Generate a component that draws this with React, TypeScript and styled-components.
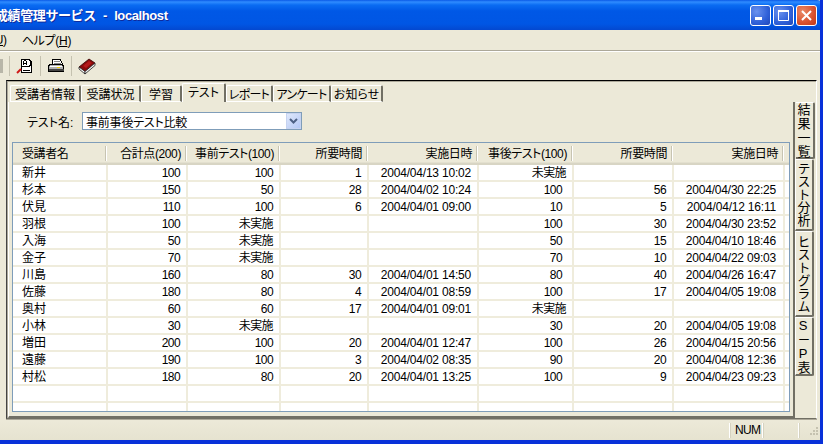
import React from "react";
import styled, { createGlobalStyle } from "styled-components";

const GlobalStyle = createGlobalStyle`
    html, body {
        margin: 0;
        padding: 0;
        background: #ece9d8;
    }
    body {
        font-family: "Liberation Sans", "Noto Sans CJK JP", sans-serif;
        font-size: 12px;
        font-feature-settings: "palt";
        color: #000;
    }
`;

const COLUMNS = "95px 80px 93px 88px 110px 95px 100px 111px 1fr";

const Window = styled.div`
    width: 823px;
    height: 444px;
    box-sizing: border-box;
    overflow: hidden;
    display: flex;
    flex-direction: column;
    background: #ece9d8;
    border-right: 3px solid #0831d9;
    border-bottom: 4px solid #0831d9;
`;

const TitleBar = styled.div`
    height: 30px;
    flex: none;
    margin-right: -3px;
    padding-right: 6px;
    box-sizing: border-box;
    display: flex;
    align-items: center;
    gap: 2px;
    background: linear-gradient(
        #0a5ae6 0,
        #2f8cff 2px,
        #0a6cf2 5px,
        #0058e6 11px,
        #0056e4 24px,
        #0348d0 30px
    );
    border-top-right-radius: 6px;
`;

const TitleText = styled.div`
    flex: 1;
    margin-left: -5px;
    margin-top: -2px;
    color: #fff;
    font-size: 13px;
    font-weight: bold;
    font-feature-settings: normal;
    letter-spacing: -0.4px;
    word-spacing: 4px;
    white-space: nowrap;
    text-shadow: 1px 1px #0f2a9c;
`;

const CaptionButton = styled.div<{ $close?: boolean }>`
    width: 21px;
    height: 21px;
    box-sizing: border-box;
    border: 1px solid #fff;
    border-radius: 3px;
    display: flex;
    align-items: center;
    justify-content: center;
    background: ${(p) =>
        p.$close
            ? "radial-gradient(circle at 30% 30%, #ea8a68, #d8512e 60%, #bf3a16)"
            : "radial-gradient(circle at 30% 30%, #6a92ee, #2f60d8 60%, #2148b8)"};
`;

const MenuBar = styled.div`
    height: 22px;
    flex: none;
    box-sizing: border-box;
    padding-bottom: 2px;
    display: flex;
    align-items: center;
    border-bottom: 1px solid #fff;
    box-shadow: inset 0 -1px #aca899;
`;

const MenuItem = styled.div<{ $clipped?: boolean }>`
    margin-left: ${(p) => (p.$clipped ? "-9px" : "15px")};
    font-size: 12px;
    letter-spacing: -0.3px;
    white-space: nowrap;
    u {
        text-underline-offset: 1px;
    }
`;

const ToolBar = styled.div`
    height: 28px;
    flex: none;
    display: flex;
    align-items: center;
`;

const ToolSeparator = styled.div`
    width: 1px;
    height: 20px;
    background: #c5c2b0;
`;

const ToolStub = styled.div`
    width: 3px;
    height: 14px;
    margin-right: 6px;
    background: #b8b6a8;
`;

const ToolIcon = styled.svg`
    display: block;
    width: 18px;
    height: 18px;
    margin: 0 6px;
`;

const Frame = styled.div`
    flex: 1;
    min-height: 0;
    margin: 0 3px 2px 6px;
    box-sizing: border-box;
    display: flex;
    border-top: 1px solid #000;
    border-left: 1px solid #444;
    border-bottom: 1px solid #716f64;
    border-right: 1px solid #fff;
    box-shadow: inset 1px 1px #aca899, 0 1px #aca899;
`;

const Page = styled.div`
    width: 788px;
    flex: none;
    padding: 2px 0 0 1px;
    box-sizing: border-box;
    display: flex;
    flex-direction: column;
`;

const TabRow = styled.div`
    height: 19px;
    flex: none;
    padding-left: 2px;
    display: flex;
    align-items: flex-end;
`;

const Tab = styled.div<{ $active?: boolean; $tight?: boolean; $w: number }>`
    width: ${(p) => p.$w}px;
    height: ${(p) => (p.$active ? 19 : 17)}px;
    box-sizing: border-box;
    padding: ${(p) => (p.$active ? "0 0 3px 0" : "0")};
    display: flex;
    align-items: center;
    justify-content: center;
    white-space: nowrap;
    font-size: 12px;
    letter-spacing: ${(p) => (p.$tight ? "-0.7px" : "0")};
    border-top: 1px solid #fff;
    border-left: 1px solid #fff;
    border-right: 2px solid #716f64;
    border-radius: 2px 2px 0 0;
    border-bottom: ${(p) => (p.$active ? "none" : "1px solid #fff")};
`;

const Panel = styled.div`
    flex: 1;
    min-height: 0;
    padding: 10px 3px 4px 3px;
    box-sizing: border-box;
    display: flex;
    flex-direction: column;
    border-left: 1px solid #fff;
    border-right: 2px solid #716f64;
    border-bottom: 2px solid #716f64;
`;

const FilterRow = styled.div`
    height: 18px;
    flex: none;
    margin-bottom: 12px;
    padding-left: 15px;
    display: flex;
    align-items: center;
`;

const FilterLabel = styled.label`
    width: 55px;
    flex: none;
    font-size: 12px;
`;

const Combo = styled.div`
    width: 220px;
    height: 18px;
    box-sizing: border-box;
    background: #fff;
    border: 1px solid #7f9db9;
    display: flex;
    align-items: center;
    justify-content: space-between;
    padding-left: 3px;
    font-size: 12px;
    letter-spacing: -0.2px;
`;

const ComboButton = styled.div`
    width: 15px;
    height: 16px;
    border: 1px solid #c6d3f0;
    box-sizing: border-box;
    background: linear-gradient(135deg, #dfe8fb, #b4c8f5);
    display: flex;
    align-items: center;
    justify-content: center;
`;

const Table = styled.div`
    flex: 1;
    min-height: 0;
    overflow: hidden;
    box-sizing: border-box;
    display: flex;
    flex-direction: column;
    background: #fff;
    border: 1px solid #7f9db9;
`;

const HeaderRow = styled.div`
    height: 22px;
    flex: none;
    box-sizing: border-box;
    display: grid;
    grid-template-columns: ${COLUMNS};
    background: #ece9d8;
    border-bottom: 2px solid #d8d5c4;
    box-shadow: inset 0 -1px #e3e0cf;
`;

const HeaderCell = styled.div<{ $left?: boolean }>`
    height: 15px;
    margin: 3px 2px 0 0;
    box-sizing: border-box;
    padding: ${(p) => (p.$left ? "0 0 0 9px" : "0 4px 0 0")};
    line-height: 16px;
    text-align: ${(p) => (p.$left ? "left" : "right")};
    white-space: nowrap;
    letter-spacing: -0.4px;
    border-right: 1px solid #c7c4b2;
    box-shadow: 1px 0 #fff;
`;

const Rows = styled.div`
    flex: 1;
    min-height: 0;
    overflow: hidden;
`;

const Row = styled.div`
    display: grid;
    grid-template-columns: ${COLUMNS};
    height: 17px;
`;

const Cell = styled.div<{ $left?: boolean; $pad?: number; $date?: boolean }>`
    box-sizing: border-box;
    height: 17px;
    padding: ${(p) => (p.$left ? "0 0 0 9px" : `0 ${p.$pad ?? 6}px 0 0`)};
    line-height: 16px;
    font-size: 12px;
    letter-spacing: ${(p) => (p.$left ? "0" : p.$date ? "-0.2px" : "-0.6px")};
    text-align: ${(p) => (p.$left ? "left" : "right")};
    white-space: nowrap;
    overflow: hidden;
    border-right: 2px solid #efecdc;
    border-bottom: 2px solid #efecdc;
`;

const SideTabs = styled.div`
    flex: none;
    padding-top: 21px;
    display: flex;
    flex-direction: column;
`;

const SideTab = styled.div<{ $active?: boolean; $h: number }>`
    width: 19px;
    height: ${(p) => p.$h}px;
    box-sizing: border-box;
    margin-left: ${(p) => (p.$active ? "1px" : "0")};
    padding-right: ${(p) => (p.$active ? "3px" : "2px")};
    writing-mode: vertical-rl;
    text-orientation: upright;
    display: flex;
    align-items: center;
    justify-content: center;
    font-size: 13px;
    font-feature-settings: normal;
    line-height: 15px;
    letter-spacing: ${(p) => (p.$active ? "0.7px" : "0")};
    white-space: nowrap;
    border-top: 1px solid #fff;
    border-right: 2px solid #716f64;
    border-bottom: 2px solid #716f64;
    border-left: ${(p) => (p.$active ? "none" : "1px solid #fff")};
    border-radius: 0 2px 2px 0;
`;

const StatusBar = styled.div`
    height: 19px;
    flex: none;
    display: flex;
    align-items: center;
    justify-content: flex-end;
    background: linear-gradient(#ece9d8, #e6e3d0);
`;

const StatusCell = styled.div<{ $w: number }>`
    width: ${(p) => p.$w}px;
    height: 15px;
    box-sizing: border-box;
    padding-left: 5px;
    line-height: 15px;
    font-size: 12px;
    letter-spacing: -0.7px;
    border-right: 1px solid #fff;
    box-shadow: 1px 0 #d5d2c0;
`;

const Grip = styled.svg`
    display: block;
    width: 21px;
    height: 15px;
    flex: none;
`;

type Result = {
    name: string;
    total: string;
    pre: string;
    preTime: string;
    preDate: string;
    post: string;
    postTime: string;
    postDate: string;
};

const r = (
    name: string,
    total: string,
    pre: string,
    preTime: string,
    preDate: string,
    post: string,
    postTime: string,
    postDate: string
): Result => ({ name, total, pre, preTime, preDate, post, postTime, postDate });

const results: Result[] = [
    r("新井", "100", "100", "1", "2004/04/13 10:02", "未実施", "", ""),
    r("杉本", "150", "50", "28", "2004/04/02 10:24", "100", "56", "2004/04/30 22:25"),
    r("伏見", "110", "100", "6", "2004/04/01 09:00", "10", "5", "2004/04/12 16:11"),
    r("羽根", "100", "未実施", "", "", "100", "30", "2004/04/30 23:52"),
    r("入海", "50", "未実施", "", "", "50", "15", "2004/04/10 18:46"),
    r("金子", "70", "未実施", "", "", "70", "10", "2004/04/22 09:03"),
    r("川島", "160", "80", "30", "2004/04/01 14:50", "80", "40", "2004/04/26 16:47"),
    r("佐藤", "180", "80", "4", "2004/04/01 08:59", "100", "17", "2004/04/05 19:08"),
    r("奥村", "60", "60", "17", "2004/04/01 09:01", "未実施", "", ""),
    r("小林", "30", "未実施", "", "", "30", "20", "2004/04/05 19:08"),
    r("増田", "200", "100", "20", "2004/04/01 12:47", "100", "26", "2004/04/15 20:56"),
    r("遠藤", "190", "100", "3", "2004/04/02 08:35", "90", "20", "2004/04/08 12:36"),
    r("村松", "180", "80", "20", "2004/04/01 13:25", "100", "9", "2004/04/23 09:23"),
    r("", "", "", "", "", "", "", ""),
    r("", "", "", "", "", "", "", ""),
    r("", "", "", "", "", "", "", ""),
];

const tabs = [
    { label: "受講者情報", width: 71 },
    { label: "受講状況", width: 60 },
    { label: "学習", width: 41 },
    { label: "テスト", width: 44, active: true },
    { label: "レポート", width: 47, tight: true },
    { label: "アンケート", width: 58, tight: true },
    { label: "お知らせ", width: 52 },
];

const sideTabs = [
    { label: "結果一覧", height: 57, active: true },
    { label: "テスト分析", height: 72 },
    { label: "ヒストグラム", height: 86 },
    { label: "S－P表", height: 59 },
];

const headers = [
    "受講者名",
    "合計点(200)",
    "事前テスト(100)",
    "所要時間",
    "実施日時",
    "事後テスト(100)",
    "所要時間",
    "実施日時",
    "",
];

const SearchIcon = () => (
    <ToolIcon viewBox="0 0 18 18" shapeRendering="crispEdges">
        <path d="M5.5 4.5h10v11h-10z" fill="#fff" stroke="#000" />
        <path d="M7 13.5h7" stroke="#000" />
        <path d="M6 2.5h7l1 1v5l-1 1H6l-1-1v-5z" fill="#fff" stroke="#000" />
        <path d="M7.5 8V4.5l1-1h1l1 1V8M7.5 6.5h3" fill="none" stroke="#000" />
        <path d="M1 16l4-4" stroke="#d01818" strokeWidth="2" shapeRendering="auto" />
    </ToolIcon>
);

const PrinterIcon = () => (
    <ToolIcon viewBox="0 0 18 18" shapeRendering="crispEdges">
        <path d="M5.5 2.5h8l2 5h-10z" fill="#fff" stroke="#000" />
        <path d="M7 4.5h6M7 6.5h7" stroke="#888" />
        <path d="M2.5 7.5h13l1 2v5h-15v-5z" fill="#b0b0b0" stroke="#000" />
        <path d="M3 9.5h12" stroke="#fff" />
        <path d="M2 12h15v2H2z" fill="#444" />
        <rect x="10" y="10" width="3" height="1" fill="#f0d000" />
    </ToolIcon>
);

const BookIcon = () => (
    <ToolIcon viewBox="0 0 18 18">
        <path d="M1 10L11 2l6 4L7 14.5z" fill="#8b0a0a" stroke="#300" strokeWidth="0.8" />
        <path d="M1 10l6 4.5v2.5l-6-5z" fill="#fff" stroke="#222" strokeWidth="0.8" />
        <path d="M7 14.5L17 6v2.5L7 17z" fill="#eee" stroke="#222" strokeWidth="0.8" />
        <path d="M5 9l6-5 3 2-6 5z" fill="#b51a1a" />
    </ToolIcon>
);

export default function App() {
    return (
        <>
            <GlobalStyle />
            <Window>
                <TitleBar>
                    <TitleText>成績管理サービス - localhost</TitleText>
                    <CaptionButton>
                        <svg width="13" height="13" viewBox="0 0 13 13">
                            <rect x="1" y="8" width="7" height="3" fill="#fff" />
                        </svg>
                    </CaptionButton>
                    <CaptionButton>
                        <svg width="13" height="13" viewBox="0 0 13 13">
                            <path d="M1.5 2.5h10v9h-10z" fill="none" stroke="#fff" />
                            <rect x="1" y="1" width="11" height="2" fill="#fff" />
                        </svg>
                    </CaptionButton>
                    <CaptionButton $close>
                        <svg width="13" height="13" viewBox="0 0 13 13">
                            <path d="M2 2l9 9M11 2l-9 9" stroke="#fff" strokeWidth="2" />
                        </svg>
                    </CaptionButton>
                </TitleBar>
                <MenuBar>
                    <MenuItem $clipped>
                        (<u>U</u>)
                    </MenuItem>
                    <MenuItem>
                        ヘルプ(<u>H</u>)
                    </MenuItem>
                </MenuBar>
                <ToolBar>
                    <ToolStub />
                    <ToolSeparator />
                    <SearchIcon />
                    <ToolSeparator />
                    <PrinterIcon />
                    <ToolSeparator />
                    <BookIcon />
                </ToolBar>
                <Frame>
                    <Page>
                        <TabRow>
                            {tabs.map((t) => (
                                <Tab key={t.label} $w={t.width} $active={t.active} $tight={t.tight}>
                                    {t.label}
                                </Tab>
                            ))}
                        </TabRow>
                        <Panel>
                            <FilterRow>
                                <FilterLabel>テスト名:</FilterLabel>
                                <Combo>
                                    事前事後テスト比較
                                    <ComboButton>
                                        <svg width="9" height="7" viewBox="0 0 9 7">
                                            <path d="M1 1l3.5 3.5L8 1" fill="none" stroke="#4d6185" strokeWidth="2" />
                                        </svg>
                                    </ComboButton>
                                </Combo>
                            </FilterRow>
                            <Table>
                                <HeaderRow>
                                    {headers.map((h, i) => (
                                        <HeaderCell key={i} $left={i === 0}>
                                            {h}
                                        </HeaderCell>
                                    ))}
                                </HeaderRow>
                                <Rows>
                                    {results.map((row, i) => (
                                        <Row key={i}>
                                            <Cell $left>{row.name}</Cell>
                                            <Cell>{row.total}</Cell>
                                            <Cell>{row.pre}</Cell>
                                            <Cell>{row.preTime}</Cell>
                                            <Cell $pad={6} $date>{row.preDate}</Cell>
                                            <Cell $pad={row.post === "未実施" ? 6 : 10}>{row.post}</Cell>
                                            <Cell>{row.postTime}</Cell>
                                            <Cell $pad={7} $date>{row.postDate}</Cell>
                                            <Cell />
                                        </Row>
                                    ))}
                                </Rows>
                            </Table>
                        </Panel>
                    </Page>
                    <SideTabs>
                        {sideTabs.map((t) => (
                            <SideTab key={t.label} $h={t.height} $active={t.active}>
                                {t.label}
                            </SideTab>
                        ))}
                    </SideTabs>
                </Frame>
                <StatusBar>
                    <StatusCell $w={31} />
                    <StatusCell $w={33}>NUM</StatusCell>
                    <StatusCell $w={36} />
                    <Grip viewBox="0 0 21 15">
                        <path d="M17 4h2v2h-2zM14 7h2v2h-2zM17 7h2v2h-2zM11 10h2v2h-2zM14 10h2v2h-2zM17 10h2v2h-2z" fill="#c5c2b0" />
                    </Grip>
                </StatusBar>
            </Window>
        </>
    );
}
